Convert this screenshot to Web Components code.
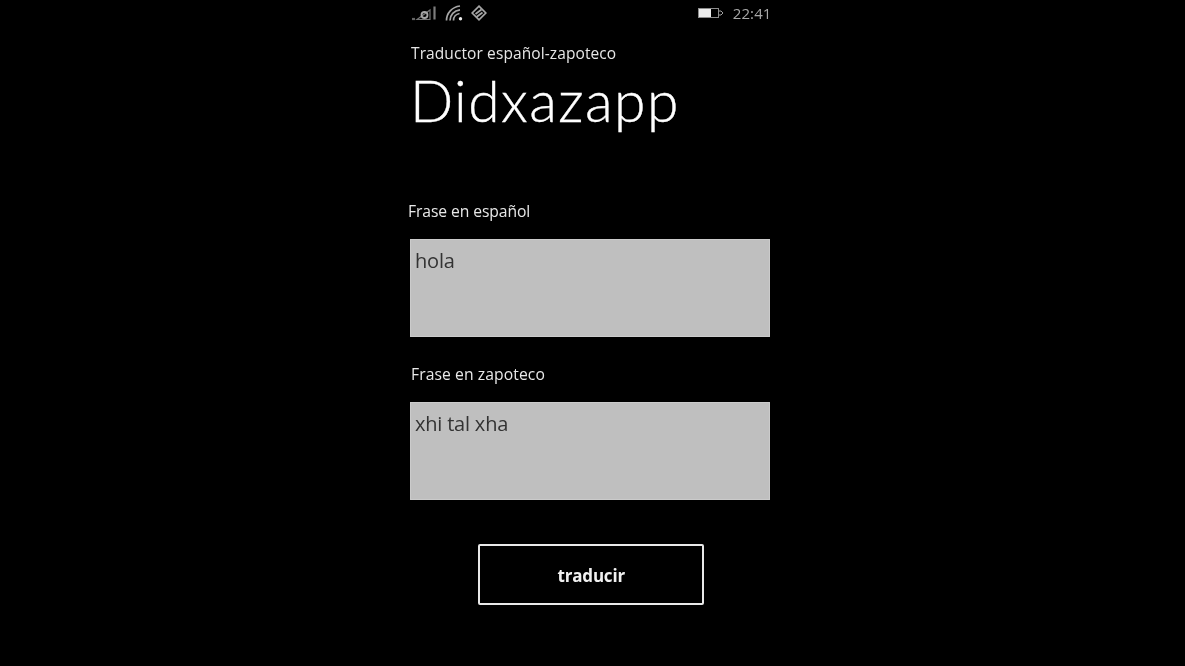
<!DOCTYPE html>
<html lang="es">
<head>
<meta charset="utf-8">
<title>Didxazapp</title>
<style>
  html, body { margin: 0; height: 100%; background: #000; }
  body { font-family: "Open Sans", sans-serif; color: #fff; overflow: hidden; }
</style>
</head>
<body>
<phone-screen>
  <status-bar></status-bar>
  <app-header subtitle="Traductor español-zapoteco" title-text="Didxazapp"></app-header>
  <phrase-field label="Frase en español" value="hola" style="--label-indent:-1px; margin-top:66px"></phrase-field>
  <phrase-field label="Frase en zapoteco" value="xhi tal xha" style="--label-indent:2px; --label-spacing:0.08px; margin-top:27.5px"></phrase-field>
  <action-button>traducir</action-button>
</phone-screen>

<script>
class PhoneScreen extends HTMLElement {
    constructor() {
        super();
        this.attachShadow({mode: 'open'}).innerHTML = `
        <style>
            :host{
                display:flex;
                flex-direction:column;
                box-sizing:border-box;
                width:361px;
                height:666px;
                margin-left:409px;
                filter:blur(0.5px);
            }
        </style>
        <slot></slot>`;
    }
}

class StatusBar extends HTMLElement {
    constructor() {
        super();
        this.attachShadow({mode: 'open'}).innerHTML = `
        <style>
            :host{
                display:flex;
                align-items:center;
                height:26px;
                padding:0 0 0 2px;
                box-sizing:border-box;
                color:#a6a6a6;
                filter:blur(0.4px);
            }
            svg{ display:block; }
            .icons{ display:flex; align-items:center; gap:8px; }
            .right{ margin-left:auto; margin-right:-1.5px; display:flex; align-items:center; gap:9px; }
            .time{ font:400 15px "Open Sans", sans-serif; color:#a8a8a8; letter-spacing:0.1px; }
        </style>
        <div class="icons">
            <svg width="26" height="16" viewBox="0 0 26 16" fill="none" stroke="currentColor">
                <path d="M1 14h3" stroke-width="2.2" opacity=".6"/>
                <path d="M6 14.5 19 5v9.5Z" stroke-width="1.2" opacity=".7"/>
                <circle cx="13.5" cy="10" r="3" stroke-width="1.8"/>
                <path d="M23.5 1.5v13" stroke-width="2.2" opacity=".75"/>
            </svg>
            <svg width="18" height="16" viewBox="0 0 18 16" fill="none" stroke="currentColor" stroke-width="1.7">
                <path d="M1.5 15.5C1.5 8 7 2 15 1"/>
                <path d="M5 15.5C5 10 9 5.5 15 4.8"/>
                <path d="M8.5 15.5C8.5 12 11 9 14.5 8.5"/>
                <circle cx="15.5" cy="13.8" r="1.7" fill="#ececec" stroke="none"/>
            </svg>
            <svg width="16" height="16" viewBox="0 0 16 16" fill="none" stroke="currentColor" stroke-width="1.7">
                <path d="M8 1.2 14.8 8 8 14.8 1.2 8Z"/>
                <path d="M4.5 9 10.5 4.5M5.500 12 11.5 7.5"/>
            </svg>
        </div>
        <div class="right">
            <svg width="26" height="10" viewBox="0 0 26 10">
                <rect x="0.5" y="0.5" width="20" height="9" fill="none" stroke="#8c8c8c"/>
                <rect x="1" y="1" width="12" height="8" fill="#ececec"/>
                <path d="M21 3h2l2 2-2 2h-2" fill="none" stroke="#a0a0a0"/>
            </svg>
            <span class="time">22:41</span>
        </div>`;
    }
}

class AppHeader extends HTMLElement {
    constructor() {
        super();
        this.attachShadow({mode: 'open'}).innerHTML = `
        <style>
            :host{ display:block; padding:16px 0 0 2px; }
            .sub{ font:400 15.5px/22px "Open Sans", sans-serif; color:#e6e6e6; letter-spacing:0.1px; }
            h1{ margin:1px 0 0 -1px; font:300 57px/70px Lato, sans-serif; color:#fff; letter-spacing:1.45px; -webkit-text-stroke:0.4px #fff; }
        </style>
        <div class="sub">${this.getAttribute('subtitle')}</div>
        <h1>${this.getAttribute('title-text')}</h1>`;
    }
}

class PhraseField extends HTMLElement {
    constructor() {
        super();
        this.attachShadow({mode: 'open'}).innerHTML = `
        <style>
            :host{ display:block; }
            label{
                display:block;
                height:21px;
                margin-left:var(--label-indent, 0);
                margin-bottom:17px;
                font:500 15.7px/21px "Open Sans", sans-serif;
                color:#e8e8e8;
                letter-spacing:var(--label-spacing, -0.1px);
            }
            .box{
                box-sizing:border-box;
                height:97.5px;
                margin-left:0.5px;
                padding:8px 4.5px;
                background:#bfbfbf;
                border:1px solid #cbcbcb;
                color:#333;
                font:400 20px/26px "Open Sans", sans-serif;
                letter-spacing:-0.2px;
            }
        </style>
        <label>${this.getAttribute('label')}</label>
        <div class="box">${this.getAttribute('value')}</div>`;
    }
}

class ActionButton extends HTMLElement {
    constructor() {
        super();
        this.attachShadow({mode: 'open'}).innerHTML = `
        <style>
            :host{ display:block; margin:44.5px 0 0 68.5px; width:226.5px; }
            button{
                display:block;
                box-sizing:border-box;
                width:100%;
                height:61px;
                background:#000;
                border:2.5px solid #e8e8e8;
                border-radius:2px;
                color:#f0f0f0;
                font:700 17px/1 "Open Sans", sans-serif;
                letter-spacing:-0.2px;
                padding:2px 0 0 1px;
            }
        </style>
        <button><slot></slot></button>`;
    }
}

customElements.define('phone-screen', PhoneScreen);
customElements.define('status-bar', StatusBar);
customElements.define('app-header', AppHeader);
customElements.define('phrase-field', PhraseField);
customElements.define('action-button', ActionButton);
</script>
</body>
</html>
